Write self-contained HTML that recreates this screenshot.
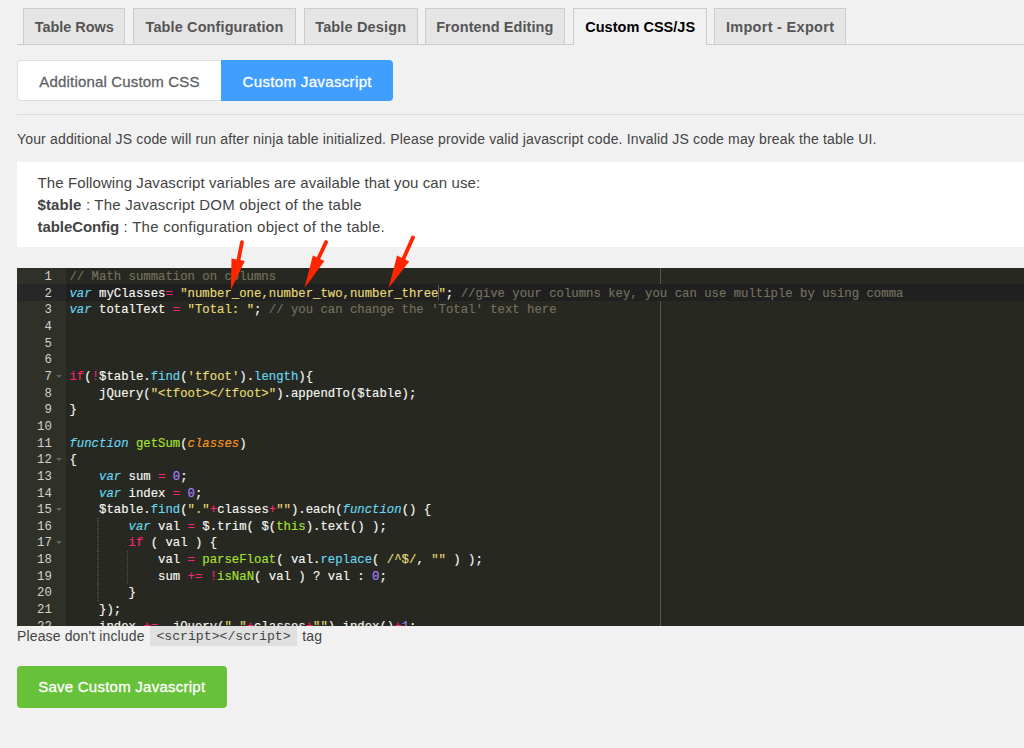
<!DOCTYPE html>
<html><head><meta charset="utf-8">
<style>
html,body{margin:0;padding:0;}
body{width:1024px;height:748px;overflow:hidden;background:#f1f1f1;font-family:"Liberation Sans",sans-serif;position:relative;color:#444;}
.abs{position:absolute;}
.tab{position:absolute;top:8px;height:36px;box-sizing:border-box;border:1px solid #ccc;border-bottom:none;background:#e5e5e5;color:#555;font-weight:bold;font-size:14.5px;line-height:37px;text-align:center;white-space:nowrap;}
.tab.active{background:#f1f1f1;color:#000;height:37px;z-index:2;}
#tabline{left:17px;top:44px;width:1007px;height:1px;background:#ccc;z-index:1;}
.rbtn{position:absolute;box-sizing:border-box;font-size:15px;text-align:center;white-space:nowrap;-webkit-text-stroke:0.3px currentColor;}
#hr{left:17px;top:114.3px;width:1007px;height:1px;background:#dcdcde;}
.t14{font-size:14px;white-space:nowrap;color:#444;line-height:16px;}
#info{left:16.8px;top:161.6px;width:1008px;height:85px;background:#fff;}
#info div{position:absolute;left:20.8px;font-size:15px;line-height:18px;white-space:pre;color:#444;}
#ed{left:16.8px;top:267.8px;width:1008px;height:358.5px;background:#272822;overflow:hidden;font-family:"Liberation Mono",monospace;font-size:12.3px;}
#gutter{position:absolute;left:0;top:0;width:49px;height:100%;background:#2F3129;}
.ln{position:absolute;left:0;width:35px;text-align:right;color:#d2d2cc;height:16.65px;line-height:16.65px;}
.cl{position:absolute;left:52.7px;white-space:pre;color:#F8F8F2;-webkit-text-stroke:0.15px currentColor;height:16.65px;line-height:16.65px;}
.k{color:#66D9EF;font-style:italic;}
.o{color:#F92672;}
.s{color:#E6DB74;}
.c{color:#75715E;}
.f{color:#66D9EF;}
.n{color:#AE81FF;}
.g{color:#A6E22E;}
.p{color:#FD971F;font-style:italic;}
.fw{position:absolute;left:39px;width:0;height:0;border-left:3px solid transparent;border-right:3px solid transparent;border-top:3.5px solid #62635d;}
.ig{position:absolute;width:1px;height:16.65px;background:repeating-linear-gradient(to bottom,#52524d 0,#52524d 1px,transparent 1px,transparent 2px);}
#margin{position:absolute;left:643px;top:0;width:1px;height:100%;background:#555651;}
#save{left:16.5px;top:666px;width:210.5px;height:42.4px;background:#67c23a;border-radius:4px;color:#fff;font-size:15px;line-height:41px;text-align:center;letter-spacing:0.248px;-webkit-text-stroke:0.3px #fff;white-space:nowrap;}
#arrows{position:absolute;left:0;top:0;z-index:5;}
</style></head><body>
<div class="tab" style="left:23.3px;width:102.0px;letter-spacing:-0.040px;">Table Rows</div>
<div class="tab" style="left:133.3px;width:162.5px;letter-spacing:0.112px;">Table Configuration</div>
<div class="tab" style="left:303.8px;width:113.8px;letter-spacing:0.144px;">Table Design</div>
<div class="tab" style="left:424.6px;width:140.4px;letter-spacing:0.076px;">Frontend Editing</div>
<div class="tab active" style="left:573.2px;width:134.0px;letter-spacing:0.024px;">Custom CSS/JS</div>
<div class="tab" style="left:714.4px;width:131.4px;letter-spacing:0.299px;">Import - Export</div>
<div class="abs" id="tabline"></div>

<div class="rbtn" style="left:17px;top:60px;width:204px;height:41px;background:#fff;border:1px solid #dcdfe6;border-right:none;border-radius:4px 0 0 4px;color:#606266;line-height:41px;letter-spacing:0.169px;">Additional Custom CSS</div>
<div class="rbtn" style="left:221px;top:60px;width:172.4px;height:41px;background:#409eff;border-radius:0 4px 4px 0;color:#fff;line-height:43px;letter-spacing:0.349px;">Custom Javascript</div>
<div class="abs" id="hr"></div>

<div class="abs t14" style="left:17px;top:130.5px;letter-spacing:0.161px;">Your additional JS code will run after ninja table initialized. Please provide valid javascript code. Invalid JS code may break the table UI.</div>

<div class="abs" id="info">
<div style="top:12px;letter-spacing:0.086px;">The Following Javascript variables are available that you can use:</div>
<div style="top:34px;"><b style="letter-spacing:0.09px;">$table</b><span style="letter-spacing:0.214px;"> : The Javascript DOM object of the table</span></div>
<div style="top:56px;"><b style="letter-spacing:-0.091px;">tableConfig</b><span style="letter-spacing:0.269px;"> : The configuration object of the table.</span></div>
</div>

<div class="abs" id="ed">
<div id="gutter"></div>
<div id="margin"></div>
<div style="position:absolute;left:0;top:16.65px;width:49px;height:16.65px;background:#272727;"></div>
<div style="position:absolute;left:49px;top:16.65px;width:960px;height:16.65px;background:#202020;"></div>
<div class="ln" style="top:1.30px;">1</div>
<div class="cl" style="top:1.30px;"><span class="c">// Math summation on columns</span></div>
<div class="ln" style="top:17.95px;">2</div>
<div class="cl" style="top:17.95px;"><span class="k">var</span> myClasses<span class="o">=</span> <span class="s">"number_one,number_two,number_three"</span>; <span class="c">//give your columns key, you can use multiple by using comma</span></div>
<div class="ln" style="top:34.60px;">3</div>
<div class="cl" style="top:34.60px;"><span class="k">var</span> totalText <span class="o">=</span> <span class="s">"Total: "</span>; <span class="c">// you can change the 'Total' text here</span></div>
<div class="ln" style="top:51.25px;">4</div>
<div class="ln" style="top:67.90px;">5</div>
<div class="ln" style="top:84.55px;">6</div>
<div class="ln" style="top:101.20px;">7</div>
<div class="cl" style="top:101.20px;"><span class="o">if</span>(<span class="o">!</span>$table.<span class="f">find</span>(<span class="s">'tfoot'</span>).<span class="f">length</span>){</div>
<div class="ln" style="top:117.85px;">8</div>
<div class="cl" style="top:117.85px;">    jQuery(<span class="s">"&lt;tfoot&gt;&lt;/tfoot&gt;"</span>).appendTo($table);</div>
<div class="ln" style="top:134.50px;">9</div>
<div class="cl" style="top:134.50px;">}</div>
<div class="ln" style="top:151.15px;">10</div>
<div class="ln" style="top:167.80px;">11</div>
<div class="cl" style="top:167.80px;"><span class="k">function</span> <span class="g">getSum</span>(<span class="p">classes</span>)</div>
<div class="ln" style="top:184.45px;">12</div>
<div class="cl" style="top:184.45px;">{</div>
<div class="ln" style="top:201.10px;">13</div>
<div class="cl" style="top:201.10px;">    <span class="k">var</span> sum <span class="o">=</span> <span class="n">0</span>;</div>
<div class="ln" style="top:217.75px;">14</div>
<div class="cl" style="top:217.75px;">    <span class="k">var</span> index <span class="o">=</span> <span class="n">0</span>;</div>
<div class="ln" style="top:234.40px;">15</div>
<div class="cl" style="top:234.40px;">    $table.<span class="f">find</span>(<span class="s">"."</span><span class="o">+</span>classes<span class="o">+</span><span class="s">""</span>).each(<span class="k">function</span>() {</div>
<div class="ln" style="top:251.05px;">16</div>
<div class="cl" style="top:251.05px;">        <span class="k">var</span> val <span class="o">=</span> $.trim( $(<span class="g">this</span>).text() );</div>
<div class="ln" style="top:267.70px;">17</div>
<div class="cl" style="top:267.70px;">        <span class="o">if</span> ( val ) {</div>
<div class="ln" style="top:284.35px;">18</div>
<div class="cl" style="top:284.35px;">            val <span class="o">=</span> <span class="g">parseFloat</span>( val.<span class="f">replace</span>( <span class="s">/^$/</span>, <span class="s">""</span> ) );</div>
<div class="ln" style="top:301.00px;">19</div>
<div class="cl" style="top:301.00px;">            sum <span class="o">+=</span> <span class="o">!</span><span class="g">isNaN</span>( val ) ? val : <span class="n">0</span>;</div>
<div class="ln" style="top:317.65px;">20</div>
<div class="cl" style="top:317.65px;">        }</div>
<div class="ln" style="top:334.30px;">21</div>
<div class="cl" style="top:334.30px;">    });</div>
<div class="ln" style="top:350.95px;">22</div>
<div class="cl" style="top:350.95px;">    index <span class="o">+=</span>  jQuery(<span class="s">"."</span><span class="o">+</span>classes<span class="o">+</span><span class="s">""</span>).index()<span class="o">+</span><span class="n">1</span>;</div>
<div class="fw" style="top:106.90px;"></div>
<div class="fw" style="top:190.15px;"></div>
<div class="fw" style="top:240.10px;"></div>
<div class="fw" style="top:273.40px;"></div>
<div class="ig" style="left:80px;width:2px;opacity:.75;top:249.75px;"></div>
<div class="ig" style="left:80px;width:2px;opacity:.75;top:266.40px;"></div>
<div class="ig" style="left:80px;width:2px;opacity:.75;top:283.05px;"></div>
<div class="ig" style="left:80px;width:2px;opacity:.75;top:299.70px;"></div>
<div class="ig" style="left:80px;width:2px;opacity:.75;top:316.35px;"></div>
<div class="ig" style="left:110px;top:283.05px;"></div>
<div class="ig" style="left:110px;top:299.70px;"></div>
<div style="position:absolute;left:421.5px;top:17.65px;width:1px;height:14.65px;background:#5f5f5a;"></div>
</div>

<div class="abs t14" style="left:17px;top:627.8px;letter-spacing:0.136px;">Please don't include</div>
<div class="abs" style="left:150.2px;top:626.3px;width:146.6px;height:20px;background:#e0e0e0;font-family:'Liberation Mono',monospace;font-size:13.17px;line-height:21px;text-align:center;color:#444;">&lt;script&gt;&lt;/script&gt;</div>
<div class="abs t14" style="left:302.3px;top:627.8px;letter-spacing:0.077px;">tag</div>

<div class="abs" id="save">Save Custom Javascript</div>
<svg id="arrows" width="1024" height="748" viewBox="0 0 1024 748"><line x1="242.0" y1="242.1" x2="238.5" y2="259.8" stroke="#ff2500" stroke-width="3.8" stroke-linecap="round"/><polygon points="231.5,258.6 244.8,261.1 230.9,289.7" fill="#ff2500"/><line x1="326.1" y1="242.1" x2="318.5" y2="258.2" stroke="#ff2500" stroke-width="3.8" stroke-linecap="round"/><polygon points="312.8,255.4 324.4,261.1 304.5,288.1" fill="#ff2500"/><line x1="413.0" y1="237.4" x2="403.5" y2="258.6" stroke="#ff2500" stroke-width="3.8" stroke-linecap="round"/><polygon points="397.1,255.5 409.2,261.6 388.6,288.1" fill="#ff2500"/></svg>
</body></html>
